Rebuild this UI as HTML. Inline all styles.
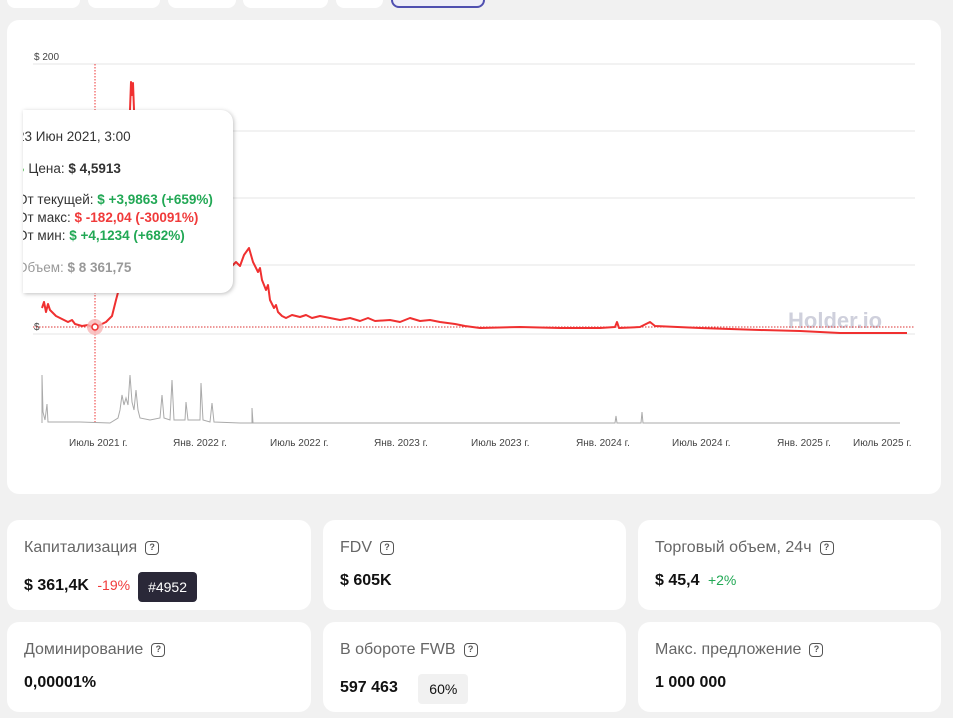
<!DOCTYPE html>
<html><head><meta charset="utf-8"><style>
*{box-sizing:border-box;margin:0;padding:0}
body{width:953px;height:718px;background:#f1f1f1;font-family:"Liberation Sans",sans-serif;position:relative;overflow:hidden;color:#222}
.tab{position:absolute;top:-12px;height:20px;background:#fff;border-radius:8px}
.card{position:absolute;background:#fff;border-radius:12px}
.lbl{position:absolute;left:17px;top:19px;font-size:16px;color:#666;white-space:nowrap}
.q{display:inline-block;width:14px;height:14px;border:1.6px solid #555;border-radius:4px;font-size:9px;line-height:11px;text-align:center;color:#555;font-weight:bold;vertical-align:2px;margin-left:8px}
.val{position:absolute;left:17px;top:52px;font-size:16px;font-weight:bold;color:#111;white-space:nowrap}
.ax{position:absolute;top:438px;font-size:10px;color:#444;white-space:nowrap}
</style></head><body>
<div class="tab" style="left:7px;width:73px"></div>
<div class="tab" style="left:88px;width:72px"></div>
<div class="tab" style="left:168px;width:68px"></div>
<div class="tab" style="left:243px;width:85px"></div>
<div class="tab" style="left:336px;width:47px"></div>
<div class="tab" style="left:391px;width:94px;border:2px solid #5050b0;background:#eeeef8"></div>

<div class="card" style="left:7px;top:20px;width:934px;height:474px"></div>
<svg style="position:absolute;left:0;top:0" width="953" height="500">
<g stroke="#e6e6e6" stroke-width="1">
<line x1="33" y1="64" x2="915" y2="64"/><line x1="33" y1="131" x2="915" y2="131"/>
<line x1="33" y1="198" x2="915" y2="198"/><line x1="33" y1="265" x2="915" y2="265"/>
<line x1="33" y1="334" x2="915" y2="334"/>
</g>
<text x="34" y="60" font-size="10" fill="#444" font-family="Liberation Sans">$ 200</text>
<text x="34" y="330" font-size="10" fill="#444" font-family="Liberation Sans">$</text>
<text x="788" y="328" font-size="22" font-weight="bold" fill="#cfd0dc" font-family="Liberation Sans">Holder.io</text>
<line x1="33" y1="327" x2="915" y2="327" stroke="#d33" stroke-dasharray="1.5,1.5"/>
<line x1="95" y1="64" x2="95" y2="424" stroke="#e33" stroke-dasharray="1.5,1.5"/>
<path d="M42,308 L44,302 L46,312 L48,304 L50,310 L53,313 L56,316 L60,318 L64,320 L68,322 L72,320 L75,324 L82,326 L88,325 L92,327 L95,327 L100,325 L106,322 L112,316 L116,300 L120,285 L124,260 L128,200 L130,110 L131,82 L132,95 L133,83 L134,110 L136,150 L140,200 L150,240 L160,260 L170,270 L180,275 L190,275 L200,270 L210,268 L220,268 L232,266 L236,262 L240,266 L244,255 L249,248 L253,262 L258,272 L260,268 L262,280 L266,290 L268,285 L270,300 L274,308 L276,305 L278,312 L282,316 L286,318 L292,315 L300,317 L306,315 L312,318 L320,316 L330,318 L340,320 L350,318 L360,321 L368,318 L375,321 L390,320 L400,322 L410,318 L420,321 L430,320 L440,322 L455,324 L465,326 L480,328 L520,327 L560,328 L600,328 L615,327 L617,322 L619,328 L640,327 L650,322 L655,326 L700,328 L760,330 L800,331 L840,333 L880,333 L907,333" fill="none" stroke="#f03030" stroke-width="2" stroke-linejoin="round"/>
<circle cx="95" cy="327" r="8" fill="#f7b5b5" opacity=".8"/>
<circle cx="95" cy="327" r="3" fill="#fff" stroke="#f03030" stroke-width="1.5"/>
<path d="M42,423 L42,375 L43,412 L45,420 L47,404 L48,422 L80,422 L110,423 L118,418 L120,410 L122,395 L124,405 L126,398 L128,405 L130,375 L132,402 L134,410 L136,390 L138,410 L140,418 L150,420 L160,418 L162,395 L164,418 L170,420 L172,380 L174,420 L185,420 L186,402 L188,420 L200,420 L201,383 L203,420 L210,422 L212,403 L214,422 L240,423 L252,423 L252,408 L253,423 L615,423 L616,416 L617,423 L641,423 L642,412 L643,423 L900,423" fill="none" stroke="#aaa" stroke-width="1"/>
</svg>
<div class="ax" style="left:69px">Июль 2021 г.</div>
<div class="ax" style="left:173px">Янв. 2022 г.</div>
<div class="ax" style="left:270px">Июль 2022 г.</div>
<div class="ax" style="left:374px">Янв. 2023 г.</div>
<div class="ax" style="left:471px">Июль 2023 г.</div>
<div class="ax" style="left:576px">Янв. 2024 г.</div>
<div class="ax" style="left:672px">Июль 2024 г.</div>
<div class="ax" style="left:777px">Янв. 2025 г.</div>
<div class="ax" style="left:853px">Июль 2025 г.</div>

<div style="position:absolute;left:23px;top:110px;width:210px;height:183px;background:#fff;border-radius:0 12px 12px 0;box-shadow:1px 1px 4px rgba(0,0,0,.25);overflow:hidden;font-size:13.5px;color:#333;white-space:nowrap">
<div style="position:absolute;left:-6px;top:19px">23 Июн 2021, 3:00</div>
<div style="position:absolute;left:-5px;top:51px"><span style="color:#2a2;font-size:11px">●</span> Цена: <b>$ 4,5913</b></div>
<div style="position:absolute;left:-6px;top:82px">От текущей: <b style="color:#22a855">$ +3,9863 (+659%)</b></div>
<div style="position:absolute;left:-6px;top:100px">От макс: <b style="color:#f03a3a">$ -182,04 (-30091%)</b></div>
<div style="position:absolute;left:-6px;top:118px">От мин: <b style="color:#22a855">$ +4,1234 (+682%)</b></div>
<div style="position:absolute;left:-6px;top:150px;color:#999">Объем: <b>$ 8 361,75</b></div>
</div>

<div class="card" style="left:7px;top:520px;width:304px;height:90px"><div class="lbl">Капитализация<span class="q">?</span></div><div class="val">$ 361,4K <span style="color:#f03a3a;font-weight:normal;font-size:14px;margin-left:4px">-19%</span><span style="display:inline-block;margin-left:8px;background:#2a2838;color:#fff;font-weight:normal;font-size:14px;padding:7px 10px;border-radius:4px;vertical-align:-2px">#4952</span></div></div>
<div class="card" style="left:323px;top:520px;width:303px;height:90px"><div class="lbl">FDV<span class="q">?</span></div><div class="val">$ 605K</div></div>
<div class="card" style="left:638px;top:520px;width:303px;height:90px"><div class="lbl">Торговый объем, 24ч<span class="q">?</span></div><div class="val">$ 45,4 <span style="color:#22a855;font-weight:normal;font-size:14px;margin-left:4px">+2%</span></div></div>
<div class="card" style="left:7px;top:622px;width:304px;height:90px"><div class="lbl">Доминирование<span class="q">?</span></div><div class="val">0,00001%</div></div>
<div class="card" style="left:323px;top:622px;width:303px;height:90px"><div class="lbl">В обороте FWB<span class="q">?</span></div><div class="val">597 463 <span style="display:inline-block;margin-left:16px;background:#f1f1f1;font-weight:normal;font-size:14px;padding:7px 11px;border-radius:4px;vertical-align:-2px">60%</span></div></div>
<div class="card" style="left:638px;top:622px;width:303px;height:90px"><div class="lbl">Макс. предложение<span class="q">?</span></div><div class="val">1 000 000</div></div>
</body></html>
